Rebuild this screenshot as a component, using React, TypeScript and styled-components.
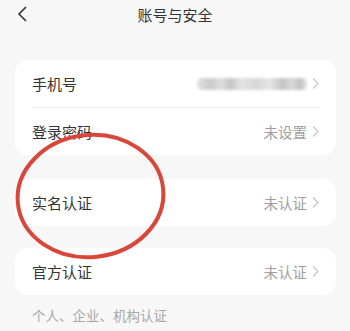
import styled, { createGlobalStyle } from "styled-components"

const Global = createGlobalStyle`
  html, body {
    margin: 0;
    padding: 0;
    background: #f7f7f7;
    font-family: "Noto Sans CJK SC", "Noto Sans", sans-serif;
  }
`

const Page = styled.div`
  position: relative;
  width: 350px;
  height: 331px;
  overflow: hidden;
  background: #f7f7f7;
`

const Header = styled.div`
  position: relative;
  height: 28px;
  display: flex;
  align-items: center;
  justify-content: center;
  font-size: 15px;
  color: #333;
`

const Back = styled.div`
  position: absolute;
  left: 15px;
  top: 4px;
  width: 18px;
  height: 20px;
`

const List = styled.div`
  display: flex;
  flex-direction: column;
  padding: 32px 14px 0 15px;
`

const Card = styled.div<{ $gap?: number }>`
  background: #fff;
  border-radius: 13px;
  padding: 0 17px;
  margin-bottom: ${(p) => p.$gap ?? 24}px;
`

const Row = styled.div<{ $divider?: boolean }>`
  height: 47px;
  display: flex;
  align-items: center;
  justify-content: space-between;
  border-bottom: ${(p) => (p.$divider ? "1px solid #eeeeee" : "none")};
`

const Label = styled.span`
  font-size: 15px;
  color: #333;
`

const Value = styled.span`
  display: flex;
  align-items: center;
  gap: 5px;
  font-size: 14.5px;
  color: #a0a0a0;
`

const Blur = styled.span`
  display: block;
  width: 110px;
  height: 12px;
  border-radius: 5px;
  filter: blur(1.4px);
  background: linear-gradient(
    90deg,
    #e2e2e2 0%,
    #c8c8c8 12%,
    #dedede 22%,
    #c4c4c4 30%,
    #e4e4e4 40%,
    #d6d6d6 55%,
    #e6e6e6 66%,
    #c4c4c4 78%,
    #d8d8d8 86%,
    #c2c2c2 94%,
    #e2e2e2 100%
  );
`

const Hint = styled.div`
  padding-left: 17px;
  font-size: 13.5px;
  line-height: 20px;
  color: #a8a8a8;
`

const Mark = styled.svg`
  position: absolute;
  left: 0;
  top: 0;
  pointer-events: none;
`

function Chevron() {
  return (
    <svg width="7" height="13" viewBox="0 0 7 13">
      <path d="M1 1.5 L6 6.5 L1 11.5" fill="none" stroke="#c6c6c6" strokeWidth="1.2" />
    </svg>
  )
}

export default function App() {
  return (
    <Page>
      <Global />
      <Header>
        <Back>
          <svg width="18" height="20" viewBox="0 0 18 20">
            <path d="M11 3 L4 10 L11 17" fill="none" stroke="#333" strokeWidth="1.6" />
          </svg>
        </Back>
        账号与安全
      </Header>
      <List>
        <Card>
          <Row $divider>
            <Label>手机号</Label>
            <Value>
              <Blur />
              <Chevron />
            </Value>
          </Row>
          <Row>
            <Label>登录密码</Label>
            <Value>
              未设置
              <Chevron />
            </Value>
          </Row>
        </Card>
        <Card $gap={22}>
          <Row>
            <Label>实名认证</Label>
            <Value>
              未认证
              <Chevron />
            </Value>
          </Row>
        </Card>
        <Card $gap={10}>
          <Row>
            <Label>官方认证</Label>
            <Value>
              未认证
              <Chevron />
            </Value>
          </Row>
        </Card>
        <Hint>个人、企业、机构认证</Hint>
      </List>
      <Mark width="350" height="331" viewBox="0 0 350 331">
        <ellipse
          cx="90.5"
          cy="196"
          rx="73"
          ry="61"
          transform="rotate(-6 90.5 196)"
          fill="none"
          stroke="#d8473a"
          strokeWidth="4"
        />
      </Mark>
    </Page>
  )
}
